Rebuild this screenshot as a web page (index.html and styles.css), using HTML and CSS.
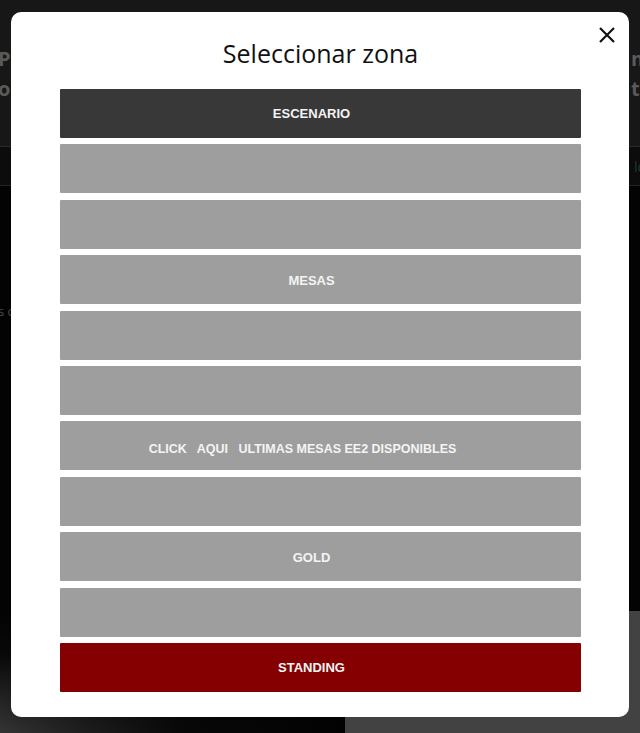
FILE: index.html
```html
<!DOCTYPE html>
<html lang="es">
<head>
<meta charset="utf-8">
<title>Seleccionar zona</title>
<link rel="stylesheet" href="styles.css">
</head>
<body>
<div class="page">
  <div class="page-head">
    <div class="head-col left">Pr<br>ol</div>
    <div class="head-col right">m<br>to</div>
  </div>
  <div class="page-row">
    <span class="row-right">lo</span>
  </div>
  <div class="page-body">
    <div class="body-text">s c</div>
  </div>
  <div class="page-foot">
    <div class="foot-img"></div>
    <div class="foot-panel"></div>
  </div>
</div>

<div class="modal">
  <button class="close" aria-label="Cerrar">
    <svg width="18" height="18" viewBox="0 0 18 18"><path d="M2 2 L16 16 M16 2 L2 16" stroke="#111" stroke-width="2.2" fill="none"/></svg>
  </button>
  <h1 class="title">Seleccionar zona</h1>
  <div class="zones">
    <div class="zone dark">ESCENARIO</div>
    <div class="zone gray"></div>
    <div class="zone gray"></div>
    <div class="zone gray">MESAS</div>
    <div class="zone gray"></div>
    <div class="zone gray"></div>
    <div class="zone gray offset">CLICK&nbsp;&nbsp; AQUI&nbsp;&nbsp; ULTIMAS MESAS EE2 DISPONIBLES</div>
    <div class="zone gray"></div>
    <div class="zone gray">GOLD</div>
    <div class="zone gray"></div>
    <div class="zone red">STANDING</div>
  </div>
</div>
</body>
</html>
```

FILE: styles.css
```css
* { box-sizing: border-box; }
html, body { margin: 0; padding: 0; }
body {
  width: 640px;
  height: 733px;
  overflow: hidden;
  background: #050505;
  font-family: "Open Sans", "Liberation Sans", sans-serif;
}

/* dimmed page behind the modal */
.page {
  display: flex;
  flex-direction: column;
  height: 733px;
}
.page-head {
  height: 147px;
  background: #171717;
  display: flex;
  justify-content: space-between;
  padding-top: 44px;
  border-bottom: 1px solid #2a2a2a;
}
.head-col {
  font-family: "Open Sans", sans-serif;
  font-weight: 700;
  font-size: 20px;
  line-height: 30px;
  color: #5a5a5a;
}
.head-col.left { margin-left: -2px; }
.head-col.right { margin-right: -12px; }
.page-row {
  height: 39px;
  background: #0c0c0c;
  border-bottom: 1px solid #222;
  display: flex;
  justify-content: flex-end;
  align-items: center;
}
.row-right {
  color: #1d3a36;
  font-size: 14px;
  margin-right: -6px;
}
.page-body {
  flex: 1;
  background: #030303;
  padding-top: 116px;
}
.body-text {
  color: #4a4a4a;
  font-size: 13px;
  margin-left: -2px;
}
.page-foot {
  height: 122px;
  display: flex;
}
.foot-img {
  width: 345px;
  background:
    linear-gradient(to bottom, rgba(3,3,3,1) 0%, rgba(3,3,3,0.9) 35%, rgba(3,3,3,0) 100%),
    linear-gradient(100deg, #3a3a3a 0%, #1c1c1c 30%, #080808 55%, #020202 100%);
}
.foot-panel {
  flex: 1;
  background: #424242;
}

/* modal */
.modal {
  position: fixed;
  left: 11px;
  top: 12px;
  width: 618px;
  height: 705px;
  background: #fff;
  border-radius: 10px;
  padding: 25px 48px 25px 49px;
  display: flex;
  flex-direction: column;
}
.close {
  position: absolute;
  top: 14px;
  right: 13px;
  width: 18px;
  height: 18px;
  padding: 0;
  border: 0;
  background: none;
}
.close svg { display: block; }
.title {
  margin: 0 0 20px;
  font-family: "Open Sans", sans-serif;
  font-weight: 400;
  font-size: 25px;
  line-height: 32px;
  text-align: center;
  color: #111;
}
.zones {
  display: flex;
  flex-direction: column;
  gap: 6.4px;
}
.zone {
  height: 49px;
  display: flex;
  align-items: center;
  justify-content: center;
  padding-right: 18px;
  font-family: "Liberation Sans", Arial, sans-serif;
  font-weight: 700;
  font-size: 13px;
  color: #f4f4f4;
  border-radius: 1px;
}
.zone.gray { padding-top: 2px; }
.zone.dark { background: #383838; }
.zone.gray { background: #9e9e9e; }
.zone.red { background: #850000; }
.zone.offset {
  padding-right: 36px;
  padding-top: 6px;
  font-size: 12.5px;
}
```
